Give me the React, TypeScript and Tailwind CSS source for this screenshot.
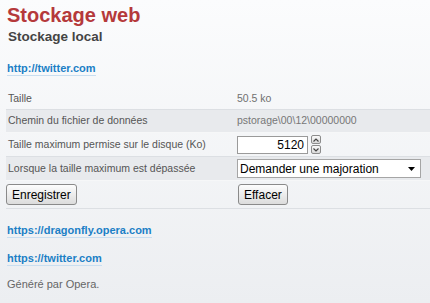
import React from "react";

const font = { fontFamily: '"Liberation Sans", Arial, sans-serif' };

function Link({ href }: { href: string }) {
  return (
    <a
      href="#"
      className="block w-fit font-bold text-[11px] leading-[13px] text-[#1b7fc6] border-b border-[#c9def0] no-underline"
    >
      {href}
    </a>
  );
}

function Spinner() {
  return (
    <div className="flex flex-col gap-[1px] ml-[3px]">
      {["up", "down"].map((dir) => (
        <div
          key={dir}
          className="w-[10px] h-[9px] rounded-[2px] border border-[#8c8c8c] bg-gradient-to-b from-[#fafafa] to-[#d9d9d9] flex items-center justify-center"
        >
          <svg width="6" height="4" viewBox="0 0 6 4">
            {dir === "up" ? (
              <path d="M0.5 3.5 L3 1 L5.5 3.5" fill="none" stroke="#444" strokeWidth="1.2" />
            ) : (
              <path d="M0.5 0.5 L3 3 L5.5 0.5" fill="none" stroke="#444" strokeWidth="1.2" />
            )}
          </svg>
        </div>
      ))}
    </div>
  );
}

function Button({ label }: { label: string }) {
  return (
    <button className="h-[21px] px-[5px] rounded-[3px] border border-[#8a8a8a] bg-gradient-to-b from-[#fdfdfd] to-[#dcdcdc] text-[12px] text-black leading-none">
      {label}
    </button>
  );
}

export default function App() {
  return (
    <div
      className="w-[430px] h-[303px] overflow-hidden bg-gradient-to-b from-[#fbfcfd] to-[#eceef1] text-[#555]"
      style={font}
    >
      <div className="pl-[7px] pt-[4px]">
        <h1 className="text-[20px] leading-[23px] font-bold text-[#b5393b]">Stockage web</h1>
        <h2 className="mt-[2px] text-[13.5px] leading-[16px] font-bold text-[#444] pl-[1px]">
          Stockage local
        </h2>
      </div>

      {/* Domain */}
      <div className="pl-[7px] mt-[17px]">
        <Link href="http://twitter.com" />
      </div>

      {/* Table */}
      <div className="ml-[6px] mt-[13px] text-[10.5px]">
        <div className="flex items-center h-[21px] border-b border-[#dcdfe3]">
          <div className="w-[231px] pl-[2px]">Taille</div>
          <div className="text-[#707070]">50.5 ko</div>
        </div>
        <div className="flex items-center h-[23px] border-b border-[#f6f7f8] bg-[#e8eaed]">
          <div className="w-[231px] pl-[2px]">Chemin du fichier de données</div>
          <div className="text-[#777]">pstorage\00\12\00000000</div>
        </div>
        <div className="flex items-center h-[24px] border-b border-[#dcdfe3]">
          <div className="w-[231px] pl-[2px]">Taille maximum permise sur le disque (Ko)</div>
          <div className="flex items-center">
            <div className="w-[71px] h-[18px] border border-[#9a9a9a] bg-white text-black text-[12px] text-right pr-[3px] leading-[16px]">
              5120
            </div>
            <Spinner />
          </div>
        </div>
        <div className="flex items-center h-[24px] border-b border-[#f6f7f8] bg-[#e8eaed]">
          <div className="w-[231px] pl-[2px]">Lorsque la taille maximum est dépassée</div>
          <div className="w-[184px] h-[19px] border border-[#a5a5a5] bg-white text-black text-[12px] flex items-center justify-between pl-[2px] pr-[5px]">
            <span>Demander une majoration</span>
            <svg width="7" height="4" viewBox="0 0 7 4">
              <path d="M0 0 L7 0 L3.5 4 Z" fill="#000" />
            </svg>
          </div>
        </div>
        <div className="flex items-center h-[28px] border-b border-[#dcdfe3]">
          <div className="w-[231px]">
            <Button label="Enregistrer" />
          </div>
          <div className="pl-[1px]">
            <Button label="Effacer" />
          </div>
        </div>
      </div>

      {/* Other domains */}
      <div className="pl-[7px] mt-[15px] flex flex-col gap-[14px]">
        <Link href="https://dragonfly.opera.com" />
        <Link href="https://twitter.com" />
      </div>

      <p className="pl-[7px] mt-[12px] text-[11px] leading-[13px] text-[#666]">Généré par Opera.</p>
    </div>
  );
}
